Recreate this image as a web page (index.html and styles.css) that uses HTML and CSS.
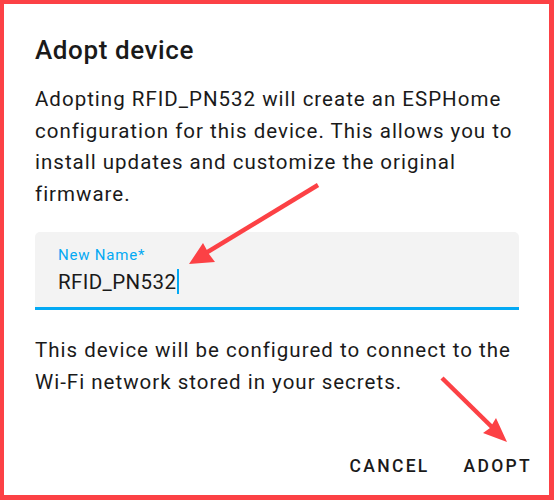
FILE: index.html
```html
<!DOCTYPE html>
<html lang="en">
<head>
  <meta charset="UTF-8" />
  <title>Adopt device</title>
  <link rel="stylesheet" href="styles.css">
</head>
<body>
  <div class="frame">
    <div class="dialog">
      <h2 class="title">Adopt device</h2>
      <p class="text">Adopting RFID_PN532 will create an ESPHome configuration for this device. This allows you to install updates and customize the original firmware.</p>

      <div class="field">
        <label class="field-label">New Name*</label>
        <div class="field-value">RFID_PN532<span class="caret"></span></div>
      </div>

      <p class="text text-2">This device will be configured to connect to the <span class="nowrap">Wi-Fi</span> network stored in your secrets.</p>

      <div class="actions">
        <button class="btn">CANCEL</button>
        <button class="btn">ADOPT</button>
      </div>
    </div>

    <svg class="arrows" width="554" height="500" viewBox="0 0 554 500">
      <g stroke="#fc4145" stroke-width="4.5" fill="none" stroke-linecap="butt">
        <line x1="318" y1="185" x2="196" y2="259" />
        <line x1="442" y1="378" x2="500" y2="435" />
      </g>
      <g fill="#fc4145">
        <polygon points="189,264 203,243 209,254 215,262" />
        <polygon points="507,442 496,418 490,428 483,433" />
      </g>
    </svg>
  </div>
</body>
</html>
```

FILE: styles.css
```css
body {
  margin: 0;
  padding: 0;
  background: #fff;
  font-family: Roboto, "Noto Sans", sans-serif;
  color: #212121;
}

.frame {
  position: relative;
  width: 554px;
  height: 500px;
  box-sizing: border-box;
  border: 5px solid #fc4145;
  border-left-width: 4px;
  border-top-width: 4px;
  background: #fff;
}

.dialog {
  padding: 30px 17px 0 31px;
  display: flex;
  flex-direction: column;
}

.title {
  margin: 0 0 18px 0;
  font-size: 26px;
  font-weight: 500;
  line-height: 32px;
  letter-spacing: 0.6px;
  color: #1a1a1a;
}

.text {
  margin: 0;
  padding-right: 13px;
  font-size: 20.5px;
  line-height: 31.5px;
  letter-spacing: 1px;
  color: #1a1a1a;
}

.nowrap {
  white-space: nowrap;
}

.field {
  margin: 22px 13px 25px 0;
  height: 78px;
  box-sizing: border-box;
  padding: 13px 23px 0 23px;
  background: #f3f3f3;
  border-radius: 5px 5px 0 0;
  border-bottom: 3px solid #03a9f4;
}

.field-label {
  display: block;
  margin-bottom: 2px;
  font-size: 15px;
  line-height: 20px;
  letter-spacing: 0.8px;
  color: #03a9f4;
}

.field-value {
  font-size: 20.5px;
  line-height: 30px;
  letter-spacing: 0.4px;
  color: #1a1a1a;
}

.caret {
  display: inline-block;
  width: 2px;
  height: 25px;
  margin-left: 1px;
  vertical-align: -5px;
  background: #03a9f4;
}

.actions {
  margin-top: 58px;
  display: flex;
  justify-content: flex-end;
  gap: 34px;
}

.btn {
  border: none;
  background: none;
  padding: 0;
  font-family: Roboto, "Noto Sans", sans-serif;
  font-size: 17.5px;
  font-weight: 500;
  line-height: 20px;
  letter-spacing: 2.3px;
  color: #1a1a1a;
}

.arrows {
  position: absolute;
  left: -4px;
  top: -4px;
  pointer-events: none;
}
```
